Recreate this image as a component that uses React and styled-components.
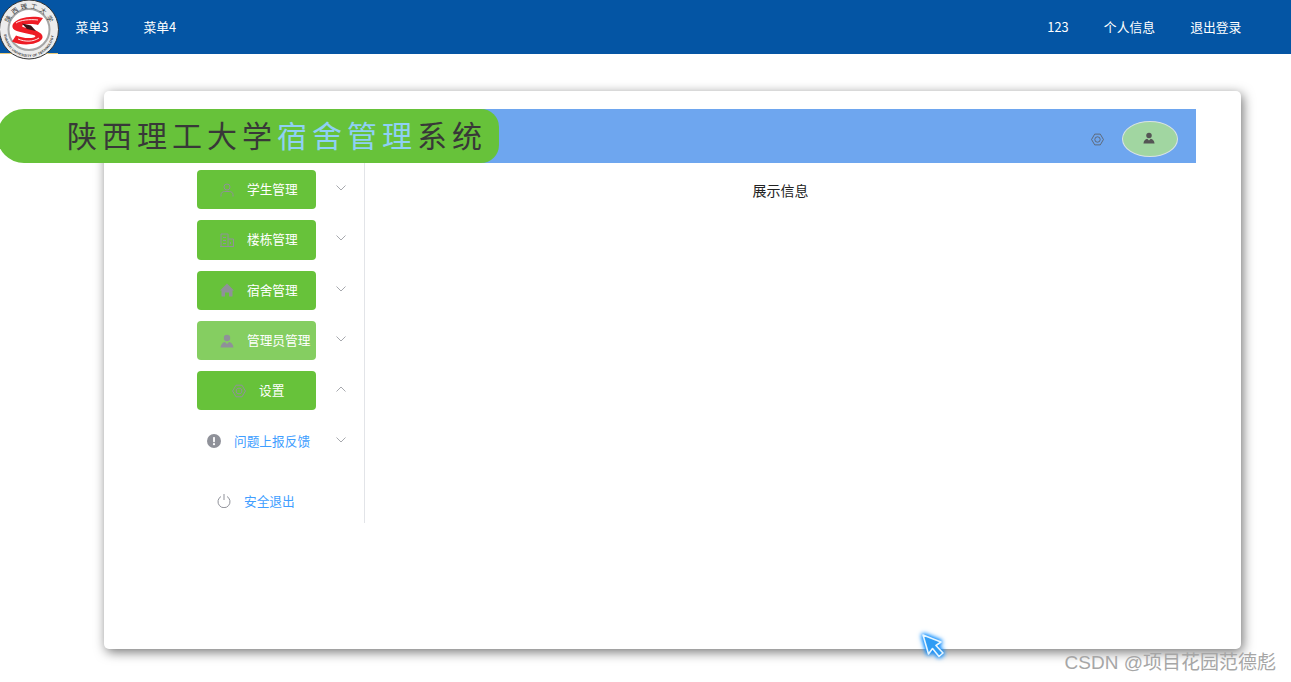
import React from 'react';
import styled, { createGlobalStyle } from 'styled-components';

const GlobalStyle = createGlobalStyle`
  html, body {
    margin: 0;
    padding: 0;
    height: 100%;
    overflow: hidden;
    background: #fff;
    font-family: "Noto Sans CJK SC", "Liberation Sans", sans-serif;
  }
`;

const Page = styled.div`
  position: relative;
  width: 1291px;
  height: 682px;
  overflow: hidden;
`;

const TopBar = styled.header`
  display: flex;
  align-items: center;
  height: 54px;
  padding-right: 32px;
  background: #0455a4;
`;

const LogoSlot = styled.div`
  position: relative;
  width: 58px;
  height: 54px;
  box-sizing: border-box;
  border-bottom: 1px solid #e8c777;
  flex-shrink: 0;
`;

const LogoWrap = styled.div`
  position: absolute;
  left: -2px;
  top: -1px;
  width: 62px;
  height: 62px;
`;

const NavItem = styled.a`
  padding: 0 17.6px;
  color: #fff;
  font-size: 12.8px;
  line-height: 54px;
  cursor: pointer;
`;

const NavSpacer = styled.div`
  flex: 1;
`;

const Card = styled.main`
  box-sizing: border-box;
  width: 1137px;
  height: 558px;
  margin: 37px 0 0 104px;
  padding: 18px 45px 0 0;
  background: #fff;
  border-radius: 5px;
  box-shadow: 2px 3px 12px rgba(0, 0, 0, 0.55);
`;

const HeaderBar = styled.div`
  display: flex;
  align-items: center;
  justify-content: flex-end;
  height: 54px;
  padding: 6px 18px 0 0;
  box-sizing: border-box;
  background: #6ea6ef;
`;

const Banner = styled.div`
  position: absolute;
  left: -3px;
  top: 109px;
  display: flex;
  align-items: center;
  box-sizing: border-box;
  width: 502px;
  height: 54px;
  padding: 0 0 5px 70px;
  background: #67c23a;
  border-radius: 27px 18px 18px 27px;
`;

const Title = styled.h1`
  margin: 0;
  color: #383838;
  font-family: "Noto Sans CJK SC", sans-serif;
  font-size: 30px;
  font-weight: 400;
  letter-spacing: 5px;
  line-height: 44px;
  white-space: nowrap;
`;

const TitleAccent = styled.span`
  color: #8fd0f5;
`;

const GearButton = styled.span`
  display: flex;
  margin-right: 18px;
  color: #5d6470;
`;

const Avatar = styled.span`
  display: flex;
  align-items: center;
  justify-content: center;
  box-sizing: border-box;
  width: 56px;
  height: 36px;
  padding: 0 3px 2px 0;
  color: #555;
  background: #a1d6a1;
  border: 1px solid #d9e3e3;
  border-radius: 50%;
`;

const Content = styled.div`
  display: flex;
  height: 360px;
`;

const Sidebar = styled.nav`
  box-sizing: border-box;
  flex: 0 0 261px;
  padding: 7px 0 0 93px;
  border-right: 1px solid #e2e4e8;
`;

const Row = styled.div`
  display: flex;
  align-items: center;
  height: 39.3px;
  margin-bottom: 11px;
`;

const MenuLabel = styled.span`
  margin-top: -2px;
`;

const MenuButton = styled.div`
  display: flex;
  align-items: center;
  gap: 13px;
  box-sizing: border-box;
  width: 119px;
  height: 100%;
  padding-left: ${(p) => (p.$wide ? 35 : 23)}px;
  color: #fff;
  font-size: 12.7px;
  white-space: nowrap;
  background: ${(p) => (p.$hover ? '#85ce61' : '#67c23a')};
  border-radius: 4px;
`;

const LinkButton = styled.div`
  display: flex;
  align-items: center;
  gap: 13px;
  box-sizing: border-box;
  width: 119px;
  padding-left: ${(p) => p.$inset}px;
  color: #409eff;
  font-size: 12.7px;
  white-space: nowrap;
`;

const LogoutRow = styled(Row)`
  margin-top: 21px;
`;

const ArrowCell = styled.span`
  display: flex;
  margin: -3px 0 0 20px;
  color: #909399;
`;

const IconBox = styled.span`
  display: flex;
  flex-shrink: 0;
  color: #8f9199;
`;

const Main = styled.section`
  flex: 1;
  padding-top: 17px;
  color: #222;
  font-size: 14px;
  line-height: 20px;
  text-align: center;
`;

const Pointer = styled.div`
  position: absolute;
  left: 921px;
  top: 633px;
  display: flex;
  filter: drop-shadow(0 0 2px #0a8cff) drop-shadow(0 0 2px #0a8cff);
`;

const Watermark = styled.div`
  position: absolute;
  right: 15px;
  top: 650px;
  color: #a6a6a6;
  font-family: "Liberation Sans", "Noto Sans CJK SC", sans-serif;
  font-size: 19px;
  line-height: 26px;
  white-space: nowrap;
`;

const sealChars = ['陕', '西', '理', '工', '大', '学'];

const Logo = () => (
  <svg viewBox="0 0 62 62" width="62" height="62">
    <defs>
      <path id="sealBottom" d="M6 33 A25 25 0 0 0 56 33" />
    </defs>
    <circle cx="31" cy="30.5" r="29.5" fill="#ececec" stroke="#333" strokeWidth="1" />
    <circle cx="31" cy="30.5" r="20.5" fill="#fff" stroke="#a5a5a5" strokeWidth="2" />
    {sealChars.map((c, i) => (
      <text
        key={c}
        x="31"
        y="9.5"
        fontSize="6.5"
        fill="#333"
        textAnchor="middle"
        fontFamily="Noto Sans CJK SC, sans-serif"
        transform={`rotate(${-62.5 + i * 25} 31 30.5)`}
      >
        {c}
      </text>
    ))}
    <text fontSize="3.4" fill="#333" fontFamily="Liberation Sans, sans-serif" fontWeight="700">
      <textPath href="#sealBottom" startOffset="3%" textLength="72">SHAANXI UNIVERSITY OF TECHNOLOGY</textPath>
    </text>
    <path d="M45 19 C35 16 18 18 14.5 26 C13 32 22 33 31 35 C37 36 39 37 36 38.5 C30 40 23 38.5 18 36.5 L14 42.5 C23 47 39 46.5 44 40 C47 35 39 31 29 29 C24 28 23 27 25 26 C30 24.5 36 25 40 26 Z" fill="#ee1c25" />
    <path d="M18 24 C22 21 32 20 40 21 M20 40 C27 43 35 43 41 39" fill="none" stroke="#fff" strokeWidth="0.9" />
    <path d="M24 24.5 L33 26.5 L38 32 L29 30 Z" fill="#3a1518" />
  </svg>
);

const ChevronDown = () => (
  <svg viewBox="0 0 10 6" width="10" height="6" fill="none" stroke="currentColor" strokeWidth="0.8">
    <path d="M0.5 0.5 L5 5 L9.5 0.5" />
  </svg>
);

const ChevronUp = () => (
  <svg viewBox="0 0 10 6" width="10" height="6" fill="none" stroke="currentColor" strokeWidth="0.8">
    <path d="M0.5 5.5 L5 1 L9.5 5.5" />
  </svg>
);

const UserOutline = () => (
  <svg viewBox="0 0 14 14" width="14" height="14" fill="none" stroke="currentColor" strokeWidth="1">
    <circle cx="7" cy="4" r="3" />
    <path d="M1 13.5 V11.5 C1 9.5 3 8.5 4.5 8.5 H9.5 C11 8.5 13 9.5 13 11.5 V13.5" />
  </svg>
);

const BuildingIcon = () => (
  <svg viewBox="0 0 14 14" width="14" height="14" fill="none" stroke="currentColor" strokeWidth="1">
    <path d="M1 13.5 V1 H8 V13.5 M8 6 H13.5 V13.5 M0 13.5 H14 M3 4.5 H6 M3 7.5 H6 M3 10.5 H6 M10.5 9 V11" />
  </svg>
);

const HouseIcon = () => (
  <svg viewBox="0 0 14 14" width="14" height="14" fill="currentColor">
    <path d="M7 0.5 L14 7.5 L12.5 7.5 V13.5 H9 V9.5 H5 V13.5 H1.5 V7.5 L0 7.5 Z" />
  </svg>
);

const PersonSolid = ({ size = 14 }) => (
  <svg viewBox="0 0 14 14" width={size} height={size} fill="currentColor">
    <circle cx="7" cy="4" r="3.2" />
    <path d="M0.5 13.5 C1 10 2.5 8.5 5 8 L7 10 L9 8 C11.5 8.5 13 10 13.5 13.5 Z" />
  </svg>
);

const GearIcon = ({ size = 14 }) => (
  <svg viewBox="0 0 14 14" width={size} height={size} fill="none" stroke="currentColor" strokeWidth="1">
    <path d="M4 1.2 H10 L13.4 7 L10 12.8 H4 L0.6 7 Z" />
    <circle cx="7" cy="7" r="2.9" />
  </svg>
);

const AlertIcon = () => (
  <svg viewBox="0 0 14 14" width="14" height="14">
    <circle cx="7" cy="7" r="7" fill="currentColor" />
    <rect x="6.1" y="3" width="1.8" height="5.2" rx="0.6" fill="#fff" />
    <circle cx="7" cy="10.2" r="1.1" fill="#fff" />
  </svg>
);

const PowerIcon = () => (
  <svg viewBox="0 0 14 14" width="14" height="14" fill="none" stroke="currentColor" strokeWidth="1">
    <path d="M4 2.5 A6 6 0 1 0 10 2.5 M7 0 V6" />
  </svg>
);

const CursorArrow = () => (
  <svg viewBox="0 0 24 26" width="24" height="26">
    <path d="M2 2 L20 9 L15 12.5 L22 20 L18 23.5 L11.5 15.5 L7.5 21 Z" fill="#2f9cf4" stroke="#e6f6ff" strokeWidth="1.6" strokeLinejoin="round" />
  </svg>
);

const menus = [
  { label: '学生管理', icon: <UserOutline /> },
  { label: '楼栋管理', icon: <BuildingIcon /> },
  { label: '宿舍管理', icon: <HouseIcon /> },
  { label: '管理员管理', icon: <PersonSolid />, hover: true },
  { label: '设置', icon: <GearIcon />, wide: true, open: true },
];

export default function App() {
  return (
    <Page>
      <GlobalStyle />
      <TopBar>
        <LogoSlot>
          <LogoWrap>
            <Logo />
          </LogoWrap>
        </LogoSlot>
        <NavItem>菜单3</NavItem>
        <NavItem>菜单4</NavItem>
        <NavSpacer />
        <NavItem>123</NavItem>
        <NavItem>个人信息</NavItem>
        <NavItem>退出登录</NavItem>
      </TopBar>
      <Card>
        <HeaderBar>
          <GearButton>
            <GearIcon size={13} />
          </GearButton>
          <Avatar>
            <PersonSolid size={12} />
          </Avatar>
        </HeaderBar>
        <Content>
          <Sidebar>
            {menus.map((m) => (
              <Row key={m.label}>
                <MenuButton $hover={m.hover} $wide={m.wide}>
                  <IconBox>{m.icon}</IconBox>
                  <MenuLabel>{m.label}</MenuLabel>
                </MenuButton>
                <ArrowCell>{m.open ? <ChevronUp /> : <ChevronDown />}</ArrowCell>
              </Row>
            ))}
            <Row>
              <LinkButton $inset={10}>
                <IconBox>
                  <AlertIcon />
                </IconBox>
                <MenuLabel>问题上报反馈</MenuLabel>
              </LinkButton>
              <ArrowCell>
                <ChevronDown />
              </ArrowCell>
            </Row>
            <LogoutRow>
              <LinkButton $inset={20}>
                <IconBox>
                  <PowerIcon />
                </IconBox>
                <MenuLabel>安全退出</MenuLabel>
              </LinkButton>
            </LogoutRow>
          </Sidebar>
          <Main>展示信息</Main>
        </Content>
      </Card>
      <Banner>
        <Title>
          陕西理工大学<TitleAccent>宿舍管理</TitleAccent>系统
        </Title>
      </Banner>
      <Pointer>
        <CursorArrow />
      </Pointer>
      <Watermark>CSDN @项目花园范德彪</Watermark>
    </Page>
  );
}
